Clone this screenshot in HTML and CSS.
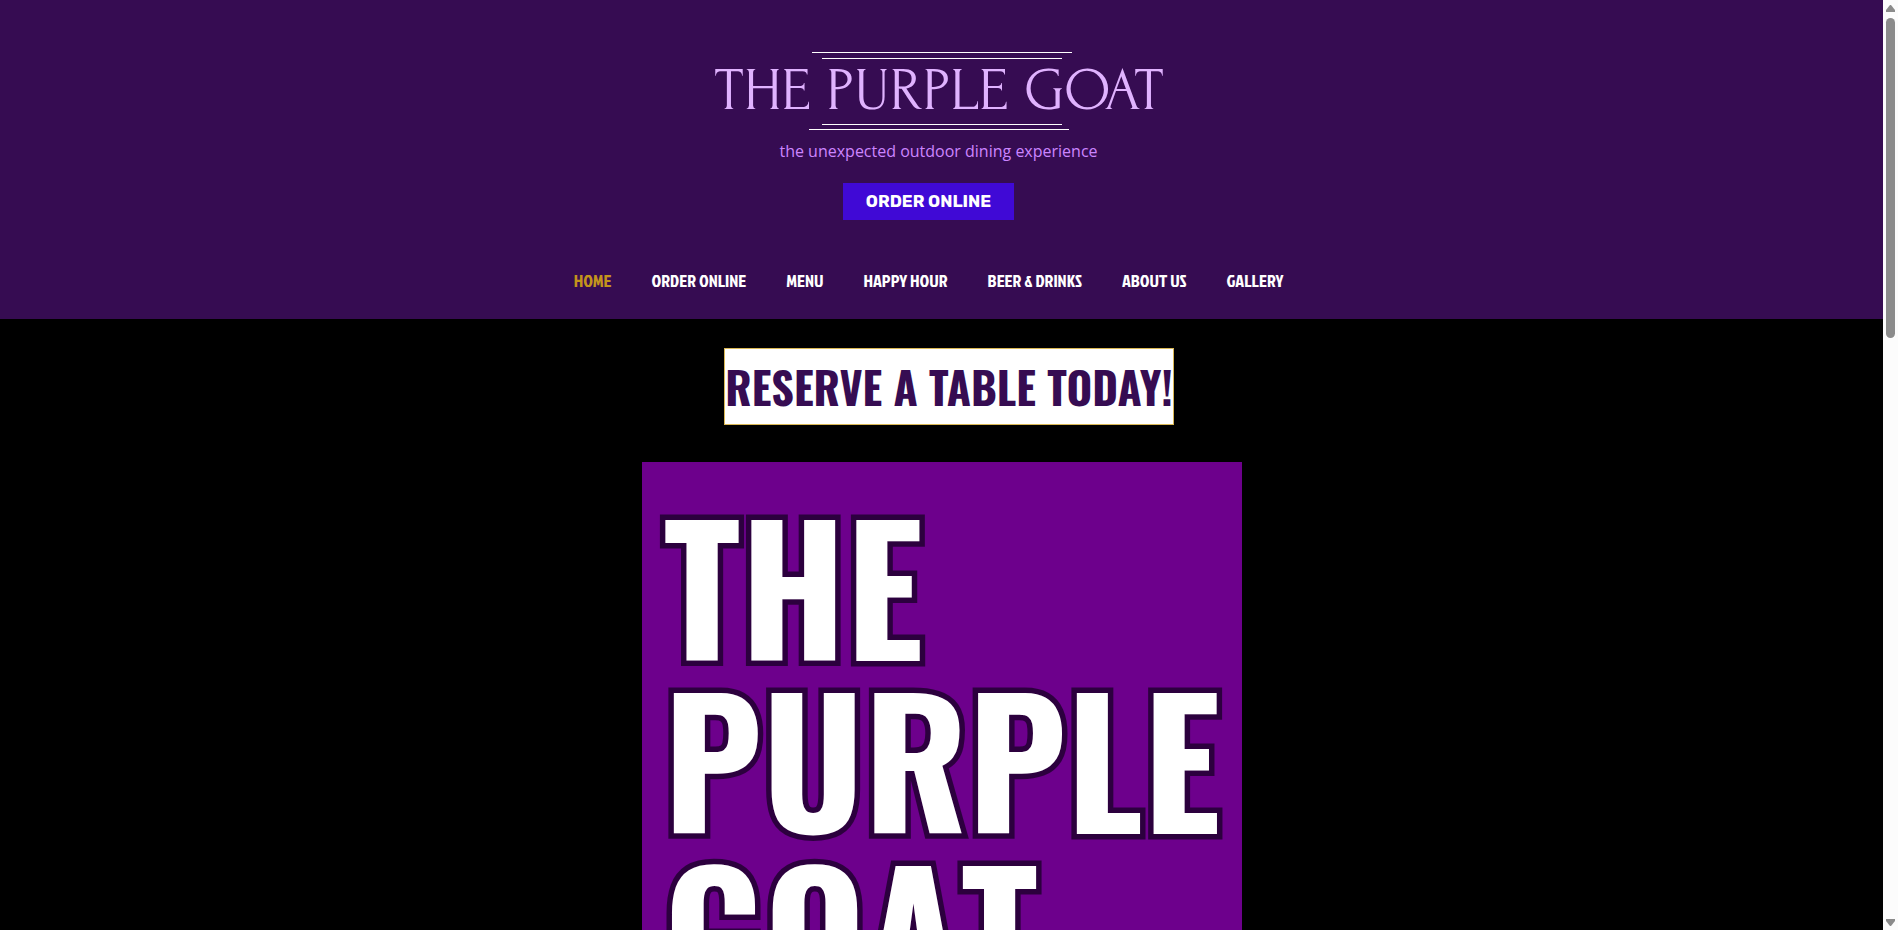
FILE: index.html
```html
<!DOCTYPE html>
<html lang="en">
<head>
    <meta charset="UTF-8">
    <meta name="viewport" content="width=device-width, initial-scale=1.0">
    <title>The Purple Goat</title>
    <link rel="stylesheet" href="styles.css">
</head>
<body>
    <div class="page">
        <header class="site-header">
            <div class="logo">
                <span class="rule rule-long"></span>
                <span class="rule rule-short"></span>
                <h1>THE PURPLE GOAT</h1>
                <span class="rule rule-short"></span>
                <span class="rule rule-long"></span>
            </div>
            <p class="tagline">the unexpected outdoor dining experience</p>
            <div class="actions">
                <a class="order-button" href="#order">ORDER ONLINE</a>
                <nav class="main-nav">
                    <a class="active" href="#home">HOME</a>
                    <a href="#order">ORDER ONLINE</a>
                    <a href="#menu">MENU</a>
                    <a href="#happy-hour">HAPPY HOUR</a>
                    <a href="#drinks">BEER &amp; DRINKS</a>
                    <a href="#about">ABOUT US</a>
                    <a href="#gallery">GALLERY</a>
                </nav>
            </div>
        </header>

        <main>
            <div class="reserve">
                <a class="reserve-link" href="#reserve">RESERVE A TABLE TODAY!</a>
            </div>
            <section class="poster">
                <h2>THE<br>PURPLE<br>GOAT</h2>
            </section>
        </main>
    </div>

    <div class="scrollbar" aria-hidden="true">
        <svg class="arrow" viewBox="0 0 9 7"><path d="M4 0h1l4 5v2H0V5z"/></svg>
        <span class="thumb"></span>
        <svg class="arrow arrow-down" viewBox="0 0 9 7"><path d="M0 0h9v2L5 7H4L0 2z"/></svg>
    </div>
</body>
</html>
```
FILE: styles.css
```css
* {
    margin: 0;
    padding: 0;
    box-sizing: border-box;
}

body {
    display: flex;
    height: 100vh;
    overflow: hidden;
    background-color: #000;
    font-family: "Open Sans", sans-serif;
}

a {
    text-decoration: none;
}

.page {
    flex: 1;
    overflow: hidden;
}

.site-header {
    display: flex;
    flex-direction: column;
    align-items: center;
    padding: 52px 0 26px;
    background-color: #360c52;
}

.logo {
    display: flex;
    flex-direction: column;
    align-items: center;
    width: 100%;
}

.rule {
    height: 1px;
    background-color: #fff;
}

.rule-long {
    width: 260px;
}

.rule-short {
    width: 240px;
}

.rule + .rule {
    margin-top: 5px;
}

.rule-long:last-child {
    margin: 4px 6px 0 0;
}

.logo h1 {
    padding: 0 5px 2px 0;
    font-family: "Forum", "Liberation Serif", serif;
    font-size: 61px;
    font-weight: normal;
    line-height: 63px;
    color: #e0b3ff;
}

.tagline {
    margin-top: 9px;
    padding-right: 6px;
    font-size: 16px;
    line-height: 24px;
    color: #cc85ff;
}

.actions {
    display: flex;
    flex-direction: column;
    align-items: center;
    padding-right: 26px;
}

.order-button {
    margin-top: 20px;
    padding: 0 23px;
    background-color: #4009d6;
    font-family: "Rubik", Inter, sans-serif;
    font-size: 17px;
    font-weight: 700;
    line-height: 37px;
    color: #fff;
}

.main-nav {
    display: flex;
    gap: 40px;
    margin-top: 49px;
}

.main-nav a {
    font-family: "Jockey One", "Voltaire", "Liberation Sans Narrow", sans-serif;
    font-size: 18px;
    line-height: 24px;
    color: #fff;
}

.main-nav a.active {
    color: #c4941c;
}

.reserve {
    display: flex;
    justify-content: center;
    padding: 29px 0 37px 15px;
}

.reserve-link {
    border: 1px solid #d9b755;
    background-color: #fff;
    font-family: "Oswald", "Liberation Sans Narrow", sans-serif;
    font-size: 44px;
    font-weight: bold;
    line-height: 75px;
    color: #360c52;
}

.poster {
    width: 600px;
    margin: 0 auto;
    padding: 35px 22px;
    background-color: #6d008c;
}

.poster h2 {
    font-family: "Oswald", "Liberation Sans Narrow", sans-serif;
    font-size: 173px;
    font-kerning: none;
    line-height: 173px;
    color: #fff;
    -webkit-text-stroke: 11px #2c003e;
    paint-order: stroke fill;
}

.scrollbar {
    display: flex;
    flex-direction: column;
    align-items: center;
    width: 15px;
    padding: 5px 0 4px;
    background-color: #fcfcfc;
}

.arrow {
    width: 9px;
    height: 7px;
    fill: #8b8b8b;
}

.arrow-down {
    margin-top: auto;
}

.thumb {
    width: 9px;
    height: 320px;
    margin-top: 6px;
    border-radius: 5px;
    background-color: #8b8b8b;
}
```
